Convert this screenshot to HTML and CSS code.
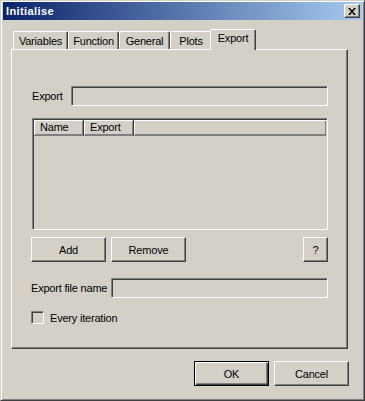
FILE: index.html
```html
<!DOCTYPE html>
<html lang="en">
  <head>
    <meta charset="UTF-8" />
    <title>Initialise</title>
    <link rel="stylesheet" href="styles.css">
  </head>
  <body>
    <div class="window">
      <div class="titlebar">
        <span class="title">Initialise</span>
        <span class="close">
          <svg width="8" height="7" viewBox="0 0 8 7">
            <path d="M0 0h2l2 2.5L6 0h2L5 3.5 8 7H6L4 4.5 2 7H0l3-3.5z" fill="#000" />
          </svg>
        </span>
      </div>

      <div class="tabs">
        <div class="tab tab-variables">Variables</div>
        <div class="tab tab-function">Function</div>
        <div class="tab tab-general">General</div>
        <div class="tab tab-plots">Plots</div>
        <div class="tab tab-export selected">Export</div>
      </div>

      <div class="panel">
        <div class="field-row">
          <label class="label label-export">Export</label>
          <div class="field"></div>
        </div>

        <div class="list">
          <div class="list-header">
            <div class="col col-name">Name</div>
            <div class="col col-export">Export</div>
            <div class="col col-rest"></div>
          </div>
        </div>

        <div class="buttons-row">
          <button class="btn">Add</button>
          <button class="btn">Remove</button>
          <span class="spacer"></span>
          <button class="btn btn-help">?</button>
        </div>

        <div class="field-row file-row">
          <label class="label label-file">Export file name</label>
          <div class="field"></div>
        </div>

        <div class="check-row">
          <span class="checkbox"></span>
          <span>Every iteration</span>
        </div>
      </div>

      <div class="dialog-buttons">
        <button class="btn default">OK</button>
        <button class="btn">Cancel</button>
      </div>
    </div>
  </body>
</html>
```

FILE: styles.css
```css
* {
  box-sizing: border-box;
}

body {
  margin: 0;
  font-family: "Liberation Sans", Arial, sans-serif;
  font-size: 11px;
  letter-spacing: -0.2px;
  color: #000;
  background: #d4d0c8;
}

.window {
  width: 365px;
  height: 401px;
  background: #d4d0c8;
  border: 1px solid;
  border-color: #d4d0c8 #404040 #404040 #d4d0c8;
  box-shadow: inset 1px 1px #fff, inset -1px -1px #808080;
  padding: 1px;
}

.titlebar {
  height: 18px;
  margin: 0 1px;
  display: flex;
  align-items: center;
  justify-content: space-between;
  padding: 0 2px 0 3px;
  background: linear-gradient(to right, #0a246a, #a6caf0);
}

.title {
  color: #fff;
  font-weight: bold;
  letter-spacing: 0.4px;
}

.close {
  width: 16px;
  height: 14px;
  display: flex;
  align-items: center;
  justify-content: center;
  background: #d4d0c8;
  border: 1px solid;
  border-color: #fff #404040 #404040 #fff;
  box-shadow: inset -1px -1px #808080;
}

.tabs {
  display: flex;
  align-items: flex-end;
  height: 20px;
  margin: 9px 0 0 11px;
  position: relative;
  z-index: 1;
}

.tab {
  height: 18px;
  padding-top: 3px;
  text-align: center;
  white-space: nowrap;
  border: 1px solid;
  border-bottom: none;
  border-color: #fff #404040 #fff #fff;
  border-radius: 2px 2px 0 0;
  box-shadow: inset -1px 0 #808080;
}

.tab-variables { width: 55px; }
.tab-function { width: 51px; }
.tab-general { width: 51px; }
.tab-plots { width: 42px; }

.tab.selected {
  width: 46px;
  height: 21px;
  margin-left: -2px;
  margin-bottom: -1px;
  padding-top: 2px;
  background: #d4d0c8;
}

.panel {
  width: 337px;
  height: 300px;
  margin-left: 9px;
  border: 1px solid;
  border-color: #fff #404040 #404040 #fff;
  box-shadow: inset -1px -1px #808080;
  padding: 36px 19px 0 20px;
}

.field-row {
  display: flex;
  align-items: center;
  height: 20px;
}

.label {
  flex-shrink: 0;
  white-space: nowrap;
}

.label-export {
  width: 39px;
}

.label-file {
  width: 80px;
  margin-left: -1px;
}

.field {
  flex: 1;
  height: 20px;
  border: 1px solid;
  border-color: #808080 #fff #fff #808080;
  box-shadow: inset 1px 1px #404040, inset -1px -1px #d4d0c8;
}

.list {
  height: 112px;
  margin-top: 12px;
  border: 1px solid;
  border-color: #808080 #fff #fff #808080;
  box-shadow: inset 1px 1px #404040, inset -1px -1px #d4d0c8;
  padding: 1px 1px 0 1px;
}

.list-header {
  display: flex;
  height: 16px;
}

.col {
  height: 16px;
  line-height: 15px;
  padding-left: 6px;
  border-right: 1px solid #404040;
  border-bottom: 1px solid #808080;
  box-shadow: inset 1px 1px #fff, inset -1px -1px #808080;
}

.col-name { width: 50px; }
.col-export { width: 50px; }

.col-rest {
  flex: 1;
  border-right: none;
}

.buttons-row {
  display: flex;
  margin: 7px 0 0 -1px;
  gap: 5px;
}

.spacer {
  flex: 1;
}

.btn {
  width: 75px;
  height: 25px;
  padding: 0;
  font: inherit;
  letter-spacing: inherit;
  color: #000;
  background: #d4d0c8;
  border: 1px solid;
  border-color: #fff #404040 #404040 #fff;
  box-shadow: inset -1px -1px #808080;
}

.btn-help {
  width: 25px;
}

.btn.default {
  border: 1px solid #000;
  box-shadow: inset 1px 1px #fff, inset -1px -1px #404040, inset -2px -2px #808080;
}

.file-row {
  margin-top: 16px;
}

.check-row {
  display: flex;
  align-items: center;
  gap: 6px;
  margin: 13px 0 0 -1px;
  height: 13px;
}

.checkbox {
  width: 13px;
  height: 13px;
  border: 1px solid;
  border-color: #808080 #fff #fff #808080;
  box-shadow: inset 1px 1px #404040, inset -1px -1px #d4d0c8;
}

.dialog-buttons {
  display: flex;
  justify-content: flex-end;
  gap: 5px;
  margin: 12px 14px 0 0;
}
```
